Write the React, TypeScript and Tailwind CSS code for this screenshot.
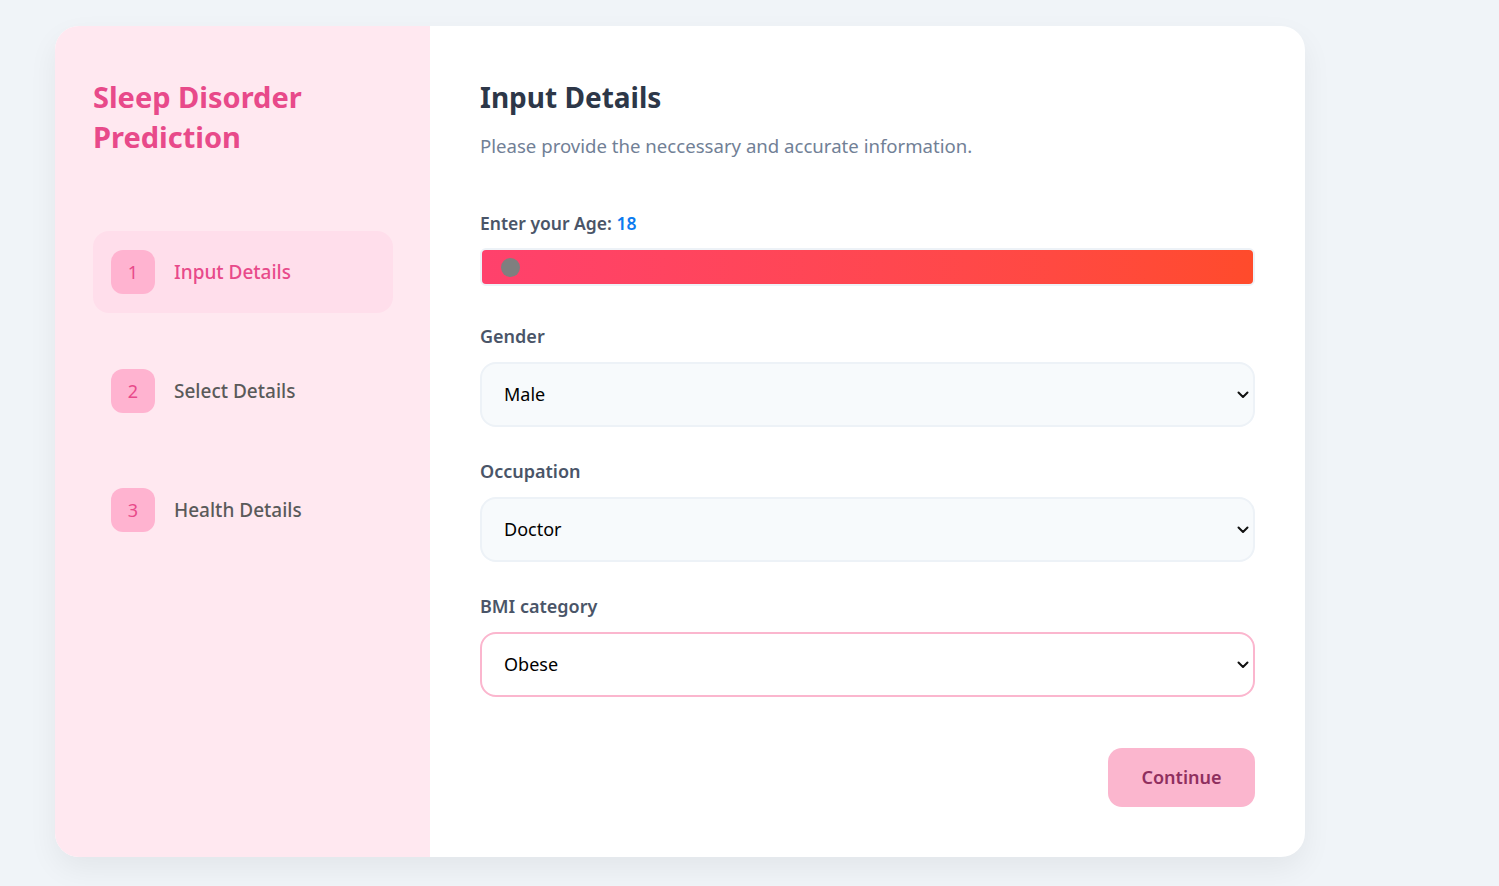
import { useState } from "react";

const STEPS = [
  { n: 1, label: "Input Details" },
  { n: 2, label: "Select Details" },
  { n: 3, label: "Health Details" },
];

function Chevron() {
  return (
    <svg
      width="12"
      height="8"
      viewBox="0 0 12 8"
      className="pointer-events-none absolute right-[6px] top-1/2 -translate-y-1/2"
    >
      <path d="M1.5 1.5 L6 6 L10.5 1.5" fill="none" stroke="#111" strokeWidth="2" strokeLinecap="round" strokeLinejoin="round" />
    </svg>
  );
}

function Field({
  label,
  value,
  options,
  active,
}: {
  label: string;
  value: string;
  options: string[];
  active?: boolean;
}) {
  const [v, setV] = useState(value);
  return (
    <div className="flex flex-col">
      <label className="mb-[14px] text-[18px] font-semibold leading-[24px] text-[#4a5568]">{label}</label>
      <div className="relative">
        <select
          value={v}
          onChange={(e) => setV(e.target.value)}
          className={
            active
              ? "h-[65px] w-full appearance-none rounded-[16px] border-2 border-[#fbb6ce] bg-white pl-[22px] text-[18px] text-black outline-none"
              : "h-[65px] w-full appearance-none rounded-[16px] border-2 border-[#edf2f7] bg-[#f7fafc] pl-[22px] text-[18px] text-black outline-none"
          }
        >
          {options.map((o) => (
            <option key={o}>{o}</option>
          ))}
        </select>
        <Chevron />
      </div>
    </div>
  );
}

export default function App() {
  const active = 1;

  return (
    <div className="min-h-[886px] bg-[#f0f4f8] pt-[26px] pl-[55px] font-['Noto_Sans',sans-serif]">
      <div className="flex h-[831px] w-[1250px] overflow-hidden rounded-[24px] bg-white shadow-[0_12px_30px_rgba(0,0,0,0.06)]">
        <aside className="w-[375px] shrink-0 bg-[#ffe8f0] pl-[38px] pr-[37px] pt-[51px]">
          <h1 className="text-[29px] font-bold leading-[40px] text-[#e84a8a]">
            Sleep Disorder
            <br />
            Prediction
          </h1>

          <div className="mt-[74px] flex flex-col gap-[37px]">
            {STEPS.map((s) => (
              <div
                key={s.n}
                className={
                  s.n === active
                    ? "flex h-[82px] items-center gap-[19px] rounded-[16px] bg-[#ffdeeb] px-[18px]"
                    : "flex h-[82px] items-center gap-[19px] rounded-[16px] px-[18px]"
                }
              >
                <div className="flex h-[44px] w-[44px] items-center justify-center rounded-[12px] bg-[#ffb3d0] text-[18px] text-[#e84a8a]">
                  {s.n}
                </div>
                <span
                  className={
                    s.n === active
                      ? "text-[19px] font-medium text-[#e84a8a]"
                      : "text-[19px] font-medium text-[#5a5a5a]"
                  }
                >
                  {s.label}
                </span>
              </div>
            ))}
          </div>
        </aside>

        <main className="flex flex-1 flex-col px-[50px] pt-[51px]">
          <h2 className="text-[28px] font-bold leading-[40px] text-[#2d3748]">Input Details</h2>
          <p className="mt-[16px] text-[18.6px] leading-[26px] text-[#718096]">
            Please provide the neccessary and accurate information.
          </p>

          <div className="mt-[52px] flex flex-col">
            <label className="mb-[13px] text-[17.5px] font-semibold leading-[24px] text-[#4a5568]">
              Enter your Age: <span className="text-[#0d7bf0]">18</span>
            </label>
            <div className="flex h-[38px] items-center rounded-[6px] border-2 border-[#edf2f7] bg-gradient-to-r from-[#ff416c] to-[#ff4b2b] pl-[19px]">
              <div className="h-[19px] w-[19px] rounded-full bg-[#7f7f7f]" />
            </div>
          </div>

          <div className="mt-[38px] flex flex-col gap-[32px]">
            <Field label="Gender" value="Male" options={["Male", "Female"]} />
            <Field
              label="Occupation"
              value="Doctor"
              options={["Doctor", "Engineer", "Nurse", "Teacher", "Lawyer", "Accountant"]}
            />
            <Field
              label="BMI category"
              value="Obese"
              options={["Normal", "Overweight", "Obese"]}
              active
            />
          </div>

          <div className="mt-[51px] flex justify-end">
            <button className="h-[59px] w-[147px] rounded-[14px] bg-[#fbb6ce] text-[18px] font-semibold text-[#8f2f5f]">
              Continue
            </button>
          </div>
        </main>
      </div>
    </div>
  );
}
